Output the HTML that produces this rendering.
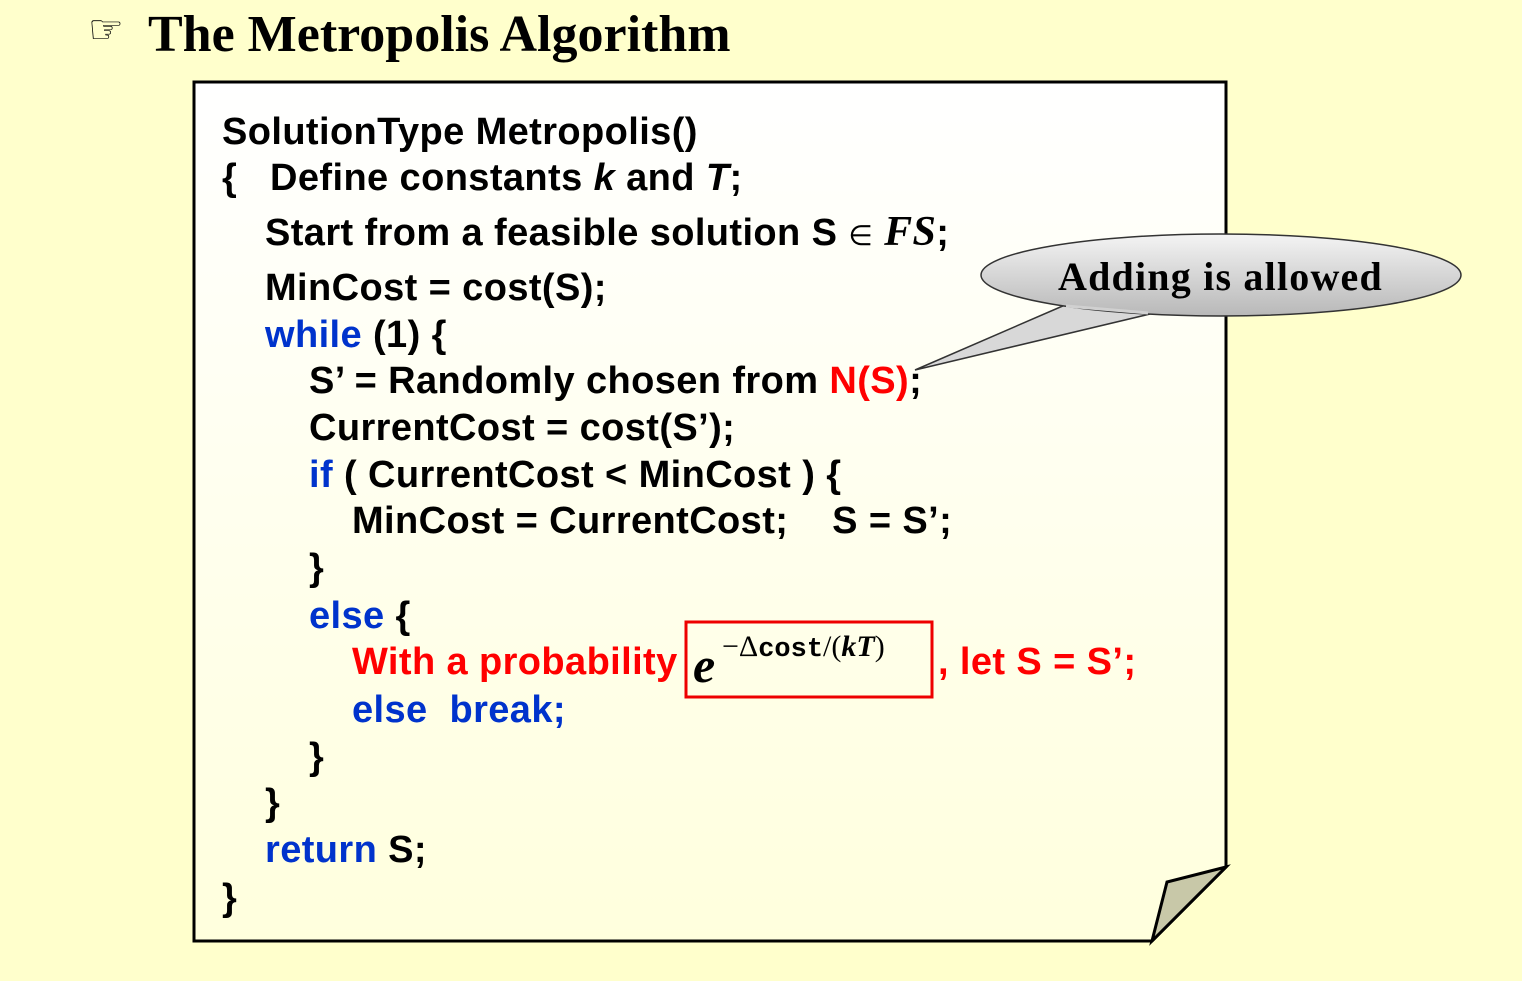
<!DOCTYPE html>
<html><head><meta charset="utf-8"><style>
body{margin:0;width:1522px;height:981px;background:#ffffcc;position:relative;overflow:hidden;font-family:"Liberation Sans",sans-serif}
.t{position:absolute;left:148px;top:5px;font:bold 52px "Liberation Serif",serif;color:#000}
.h{position:absolute;left:88px;top:8px;font-size:40px;line-height:44px}
.l{position:absolute;font-weight:bold;font-size:38px;letter-spacing:0.4px;line-height:40px;white-space:pre;color:#000}
.b{color:#0033cc}.r{color:#ff0000}
</style></head><body>
<div class="h">☞</div>
<div class="t">The Metropolis Algorithm</div>
<svg width="1522" height="981" style="position:absolute;left:0;top:0">
<defs><linearGradient id="g" x1="0" y1="0" x2="0" y2="1"><stop offset="0" stop-color="#ffffff"/><stop offset="1" stop-color="#ffffdd"/></linearGradient>
<linearGradient id="e" x1="0" y1="0" x2="0" y2="1"><stop offset="0" stop-color="#f4f4f4"/><stop offset="1" stop-color="#b8b8b8"/></linearGradient></defs>
<path d="M194 82 H1226 V867 L1152 941 H194 Z" fill="url(#g)" stroke="#000" stroke-width="3"/>
<path d="M1226 867 L1167 882 L1152 941 Z" fill="#c8c8a8" stroke="#000" stroke-width="3"/>
<path d="M1065 305 L915 370 L1150 314 Z" fill="#d8d8d8" stroke="#333" stroke-width="1.5"/>
<ellipse cx="1221" cy="275" rx="240" ry="41" fill="url(#e)" stroke="#333" stroke-width="1.5"/>
<path d="M1066 306 L1148 313" stroke="#d0d0d0" stroke-width="3"/>
<rect x="686" y="622" width="246" height="75" fill="none" stroke="#ee0000" stroke-width="3"/>
</svg>
<div style="position:absolute;left:1058px;top:253px;font:bold 40px 'Liberation Serif',serif;letter-spacing:1.2px">Adding is allowed</div>
<div class="l" style="left:222px;top:112px">SolutionType Metropolis()</div>
<div class="l" style="left:222px;top:158px">{   Define constants <i>k</i> and <i>T</i>;</div>
<div class="l" style="left:265px;top:212px">Start from a feasible solution S <span style="font-weight:normal;font-size:28px">∈</span> <i style="font-family:'Liberation Serif',serif;font-size:42px">FS</i>;</div>
<div class="l" style="left:265px;top:268px">MinCost = cost(S);</div>
<div class="l" style="left:265px;top:315px"><span class="b">while</span> (1) {</div>
<div class="l" style="left:309px;top:361px">S’ = Randomly chosen from <span class="r">N(S)</span>;</div>
<div class="l" style="left:309px;top:408px">CurrentCost = cost(S’);</div>
<div class="l" style="left:309px;top:455px"><span class="b">if</span> ( CurrentCost &lt; MinCost ) {</div>
<div class="l" style="left:352px;top:501px">MinCost = CurrentCost;    S = S’;</div>
<div class="l" style="left:309px;top:548px">}</div>
<div class="l" style="left:309px;top:596px"><span class="b">else</span> {</div>
<div class="l r" style="left:352px;top:642px">With a probability</div>
<div style="position:absolute;left:693px;top:636px;font:italic bold 50px 'Liberation Serif',serif">e</div>
<div style="position:absolute;left:722px;top:630px;font:30px 'Liberation Serif',serif;white-space:nowrap">−Δ<span style="font-family:'Liberation Mono',monospace;font-weight:bold;font-size:27px">cost</span>/(<i><b>kT</b></i>)</div>
<div class="l r" style="left:938px;top:642px">, let S = S’;</div>
<div class="l b" style="left:352px;top:690px">else  break;</div>
<div class="l" style="left:309px;top:737px">}</div>
<div class="l" style="left:265px;top:783px">}</div>
<div class="l" style="left:265px;top:830px"><span class="b">return</span> S;</div>
<div class="l" style="left:222px;top:878px">}</div>
</body></html>
